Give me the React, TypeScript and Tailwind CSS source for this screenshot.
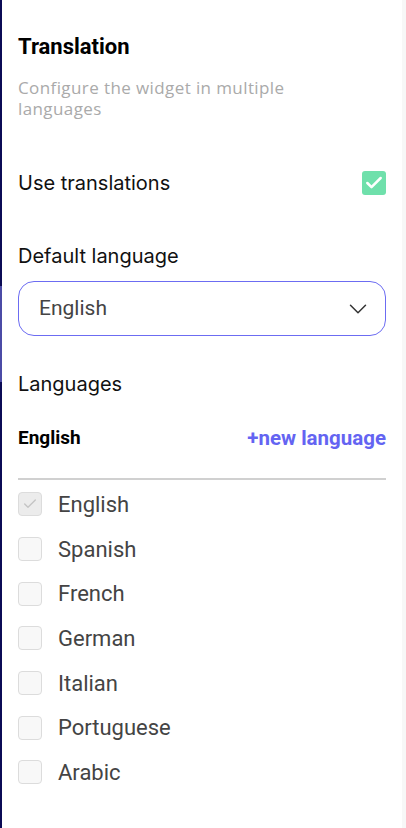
import { ChevronDown, Check } from 'lucide-react';

const languages = ['English', 'Spanish', 'French', 'German', 'Italian', 'Portuguese', 'Arabic'];

function LangRow({ name, locked }: { name: string; locked?: boolean }) {
  return (
    <div className="flex h-[44.7px] items-center gap-4">
      <div
        className={
          locked
            ? 'flex h-6 w-6 items-center justify-center rounded-[4px] border border-[#dcdcdc] bg-[#ececec]'
            : 'h-6 w-6 rounded-[4px] border border-[#dcdcdc] bg-[#f8f8f8]'
        }
      >
        {locked && <Check className="h-4 w-4 text-[#c4c4c4]" strokeWidth={2} />}
      </div>
      <span className="text-[22px] text-[#444]">{name}</span>
    </div>
  );
}

export default function App() {
  return (
    <div className="flex min-h-[828px] w-[406px] bg-white font-['Roboto',sans-serif]">
      {/* left accent stripe */}
      <div className="flex w-[2px] flex-col">
        <div className="h-[286px] bg-[#0b0b55]" />
        <div className="h-[96px] bg-[#4b4ba6]" />
        <div className="flex-1 bg-[#0b0b55]" />
      </div>

      <div className="flex-1 px-4 pt-[34px]">
        <h2 className="text-[22px] font-bold leading-[26px] text-black">Translation</h2>
        <p className="mt-[17px] max-w-[310px] text-[17px] leading-[21px] tracking-[0.4px] text-[#aaaaaa] font-['Open_Sans',sans-serif]">
          Configure the widget in multiple languages
        </p>

        <div className="mt-[51px] flex h-[26px] items-center justify-between">
          <span className="text-[20px] text-[#111] font-['Inter',sans-serif]">Use translations</span>
          <div className="flex h-6 w-6 items-center justify-center rounded-[3px] bg-[#6fe0ab]">
            <Check className="h-5 w-5 text-white" strokeWidth={3} />
          </div>
        </div>

        <div className="mt-[47px] text-[20px] leading-[26px] text-[#111] font-['Inter',sans-serif]">Default language</div>

        <div className="mt-[12px] flex h-[55px] items-center justify-between rounded-[16px] border border-[#6c6cf2] pl-5 pr-3">
          <span className="text-[21px] text-[#444]">English</span>
          <ChevronDown className="h-[30px] w-[30px] text-[#333]" strokeWidth={1.2} />
        </div>

        <div className="mt-[35px] text-[20px] leading-[26px] text-[#111] font-['Inter',sans-serif]">Languages</div>

        <div className="mt-[28px] flex h-[26px] items-center justify-between">
          <span className="text-[19px] font-bold text-black">English</span>
          <span className="text-[20.5px] font-bold text-[#6464f2]">+new language</span>
        </div>

        <div className="mt-[27px] h-[2px] bg-[#d0d0d0]" />

        <div className="mt-[2px] flex flex-col">
          {languages.map((l, i) => (
            <LangRow key={l} name={l} locked={i === 0} />
          ))}
        </div>
      </div>

      <div className="w-[4px] bg-[#f7f7f7]" />
    </div>
  );
}
